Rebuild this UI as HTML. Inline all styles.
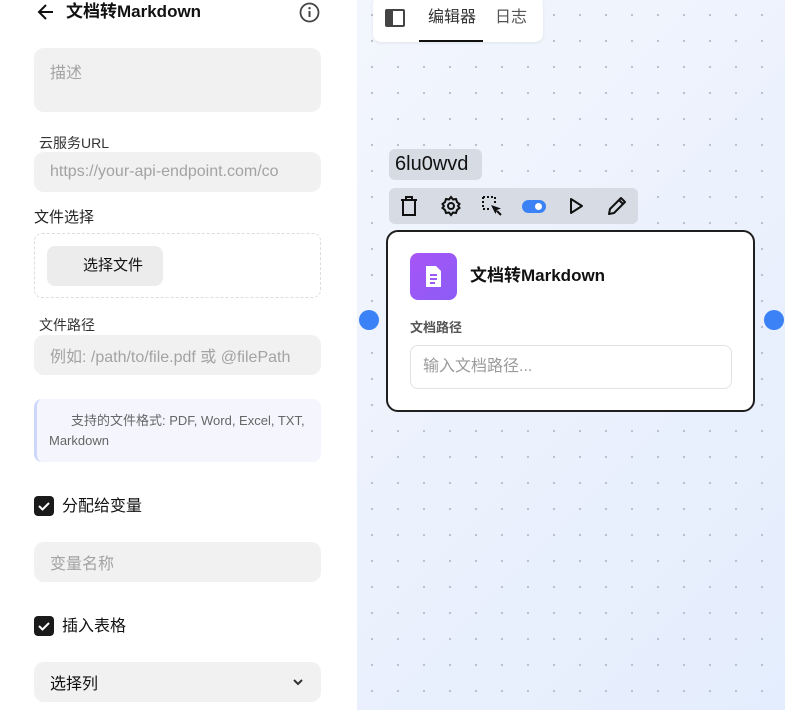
<!DOCTYPE html>
<html><head><meta charset="utf-8"><style>
*{box-sizing:border-box;margin:0;padding:0}
body{width:785px;height:710px;overflow:hidden;font-family:"Liberation Sans","Noto Sans CJK SC",sans-serif;position:relative;background:#fff}
#left{position:absolute;left:0;top:0;width:357px;height:710px;background:#fff}
#canvas{position:absolute;left:357px;top:0;width:428px;height:710px;
background-image:radial-gradient(circle,#b8bfcc 1px,transparent 1.3px),linear-gradient(135deg,#f3f6fd,#e4edfd);background-size:26px 26px,100% 100%;background-position:2px 2px,0 0}
.abs{position:absolute}
.inp{position:absolute;left:34px;width:287px;background:#f1f1f1;border-radius:10px;color:#a3a3a3;font-size:16px;padding-left:16px;display:flex;align-items:center;white-space:nowrap;overflow:hidden}
.lbl{position:absolute;font-size:14px;color:#333}
.cb{position:absolute;left:34px;width:20px;height:20px;background:#1a1a1a;border-radius:4px}
.cbt{position:absolute;left:62px;font-size:16px;color:#111}
.tb svg{position:absolute}
</style></head><body>
<div id="left">
 <svg class="abs" style="left:36px;top:2px" width="20" height="20" viewBox="0 0 20 20"><path d="M17 10H4M10 3L3 10l7 7" stroke="#111" stroke-width="2" fill="none"/></svg>
 <div class="abs" style="left:66px;top:0px;font-size:17px;font-weight:bold;color:#111;line-height:24px">文档转Markdown</div>
 <svg class="abs" style="left:299px;top:2px" width="21" height="21" viewBox="0 0 21 21"><circle cx="10.5" cy="10.5" r="9" stroke="#444" stroke-width="1.8" fill="none"/><path d="M10.5 9v6" stroke="#444" stroke-width="2"/><circle cx="10.5" cy="6.2" r="1.2" fill="#444"/></svg>
 <div class="inp" style="top:48px;height:64px;align-items:flex-start;padding-top:11px">描述</div>
 <div class="lbl" style="left:39px;top:133px">云服务URL</div>
 <div class="inp" style="top:152px;height:40px">https://your-api-endpoint.com/co</div>
 <div class="lbl" style="left:34px;top:206px;font-size:15px;color:#222">文件选择</div>
 <div class="abs" style="left:34px;top:233px;width:287px;height:65px;border:1px dashed #ddd;border-radius:8px"></div>
 <div class="abs" style="left:47px;top:246px;width:116px;height:40px;background:#ececec;border-radius:8px;font-size:15px;color:#111;padding-left:36px;line-height:40px">选择文件</div>
 <div class="lbl" style="left:39px;top:315px">文件路径</div>
 <div class="inp" style="top:335px;height:40px">例如: /path/to/file.pdf 或 @filePath</div>
 <div class="abs" style="left:34px;top:399px;width:287px;height:63px;background:#f5f6fd;border-left:3px solid #cdd6fb;border-radius:8px;font-size:13px;color:#666;padding:12px 8px 0 12px;line-height:20px;text-indent:22px">支持的文件格式: PDF, Word, Excel, TXT, Markdown</div>
 <div class="cb" style="top:496px"><svg width="20" height="20"><path d="M5 10l3.5 3.5L15 7" stroke="#fff" stroke-width="2" fill="none"/></svg></div>
 <div class="cbt" style="top:496px;line-height:22px">分配给变量</div>
 <div class="inp" style="top:542px;height:40px">变量名称</div>
 <div class="cb" style="top:616px"><svg width="20" height="20"><path d="M5 10l3.5 3.5L15 7" stroke="#fff" stroke-width="2" fill="none"/></svg></div>
 <div class="cbt" style="top:616px;line-height:22px">插入表格</div>
 <div class="inp" style="top:662px;height:40px;color:#111">选择列</div>
 <svg class="abs" style="left:292px;top:676px" width="12" height="12"><path d="M2 4l4 4 4-4" stroke="#333" stroke-width="2" fill="none"/></svg>
</div>
<div id="canvas">
 <div class="abs" style="left:16px;top:-4px;width:170px;height:46px;background:#fff;border-radius:8px;box-shadow:0 1px 3px rgba(0,0,0,.08)"></div>
 <div class="abs" style="left:28px;top:9px;width:20px;height:18px;border:2px solid #444;border-left-width:8px;border-radius:2px"></div>
 <div class="abs" style="left:71px;top:7px;font-size:16px;color:#333;line-height:22px">编辑器</div>
 <div class="abs" style="left:62px;top:40px;width:64px;height:2px;background:#111"></div>
 <div class="abs" style="left:138px;top:7px;font-size:16px;color:#555;line-height:22px">日志</div>
 <div class="abs" style="left:32px;top:149px;width:93px;height:31px;background:#d6dbe4;border-radius:6px;font-size:20px;color:#111;line-height:31px;padding-left:6px">6lu0wvd</div>
 <div class="abs tb" style="left:32px;top:188px;width:249px;height:36px;background:#d6dbe4;border-radius:6px">
  <svg style="left:9px;top:7px" width="22" height="22" viewBox="0 0 22 22"><path d="M3 5h16M8 5V2h6v3M5 5v15h12V5" stroke="#111" stroke-width="2" fill="none"/></svg>
  <svg style="left:51px;top:7px" width="22" height="22" viewBox="0 0 22 22"><path d="M11 2l2 2.5 3-.5 1 3 2.5 2-1.5 2 1.5 2-2.5 2-1 3-3-.5L11 20l-2-2.5-3 .5-1-3L2.5 13 4 11 2.5 9 5 7l1-3 3 .5z" stroke="#111" stroke-width="2" fill="none"/><circle cx="11" cy="11" r="3" stroke="#111" stroke-width="2" fill="none"/></svg>
  <svg style="left:92px;top:7px" width="24" height="24" viewBox="0 0 24 24"><path d="M2 2h12M2 2v12M14 2v6M2 14h6" stroke="#111" stroke-width="2" stroke-dasharray="2 2" fill="none"/><path d="M10 10l10 3.5-4 1.5-1.5 4z" fill="#111"/><path d="M16 16l4 4" stroke="#111" stroke-width="2"/></svg>
  <div class="abs" style="left:133px;top:12px;width:24px;height:13px;background:#3b82f6;border-radius:7px"><div class="abs" style="left:13px;top:3px;width:7px;height:7px;background:#fff;border-radius:50%"></div></div>
  <svg style="left:177px;top:8px" width="20" height="20" viewBox="0 0 20 20"><path d="M5 3l11 7-11 7z" stroke="#111" stroke-width="2" fill="none" stroke-linejoin="round"/></svg>
  <svg style="left:217px;top:7px" width="22" height="22" viewBox="0 0 22 22"><path d="M3 19l1-5L15 3l4 4L8 18z M13 5l4 4" stroke="#111" stroke-width="2" fill="none" stroke-linejoin="round"/></svg>
 </div>
 <div class="abs" style="left:29px;top:230px;width:369px;height:182px;background:#fff;border:2.5px solid #1f1f1f;border-radius:12px"></div>
 <div class="abs" style="left:53px;top:253px;width:47px;height:47px;background:linear-gradient(135deg,#a855f7,#8b5cf6);border-radius:8px">
  <svg class="abs" style="left:13px;top:12px" width="21" height="23" viewBox="0 0 21 23"><path d="M3 1h10l5 5v16H3z" fill="#fff"/><path d="M7 10h7M7 14h7M7 18h5" stroke="#9b5cf6" stroke-width="2"/></svg>
 </div>
 <div class="abs" style="left:113px;top:264px;font-size:17px;font-weight:bold;color:#111;line-height:24px">文档转Markdown</div>
 <div class="abs" style="left:53px;top:317px;font-size:13px;font-weight:bold;color:#555">文档路径</div>
 <div class="abs" style="left:53px;top:345px;width:322px;height:44px;border:1px solid #e2e2e2;border-radius:8px;font-size:16px;color:#9a9a9a;padding-left:12px;line-height:42px">输入文档路径...</div>
 <div class="abs" style="left:2px;top:310px;width:20px;height:20px;border-radius:50%;background:#3b82f6"></div>
 <div class="abs" style="left:407px;top:310px;width:20px;height:20px;border-radius:50%;background:#3b82f6"></div>
</div>
</body></html>
